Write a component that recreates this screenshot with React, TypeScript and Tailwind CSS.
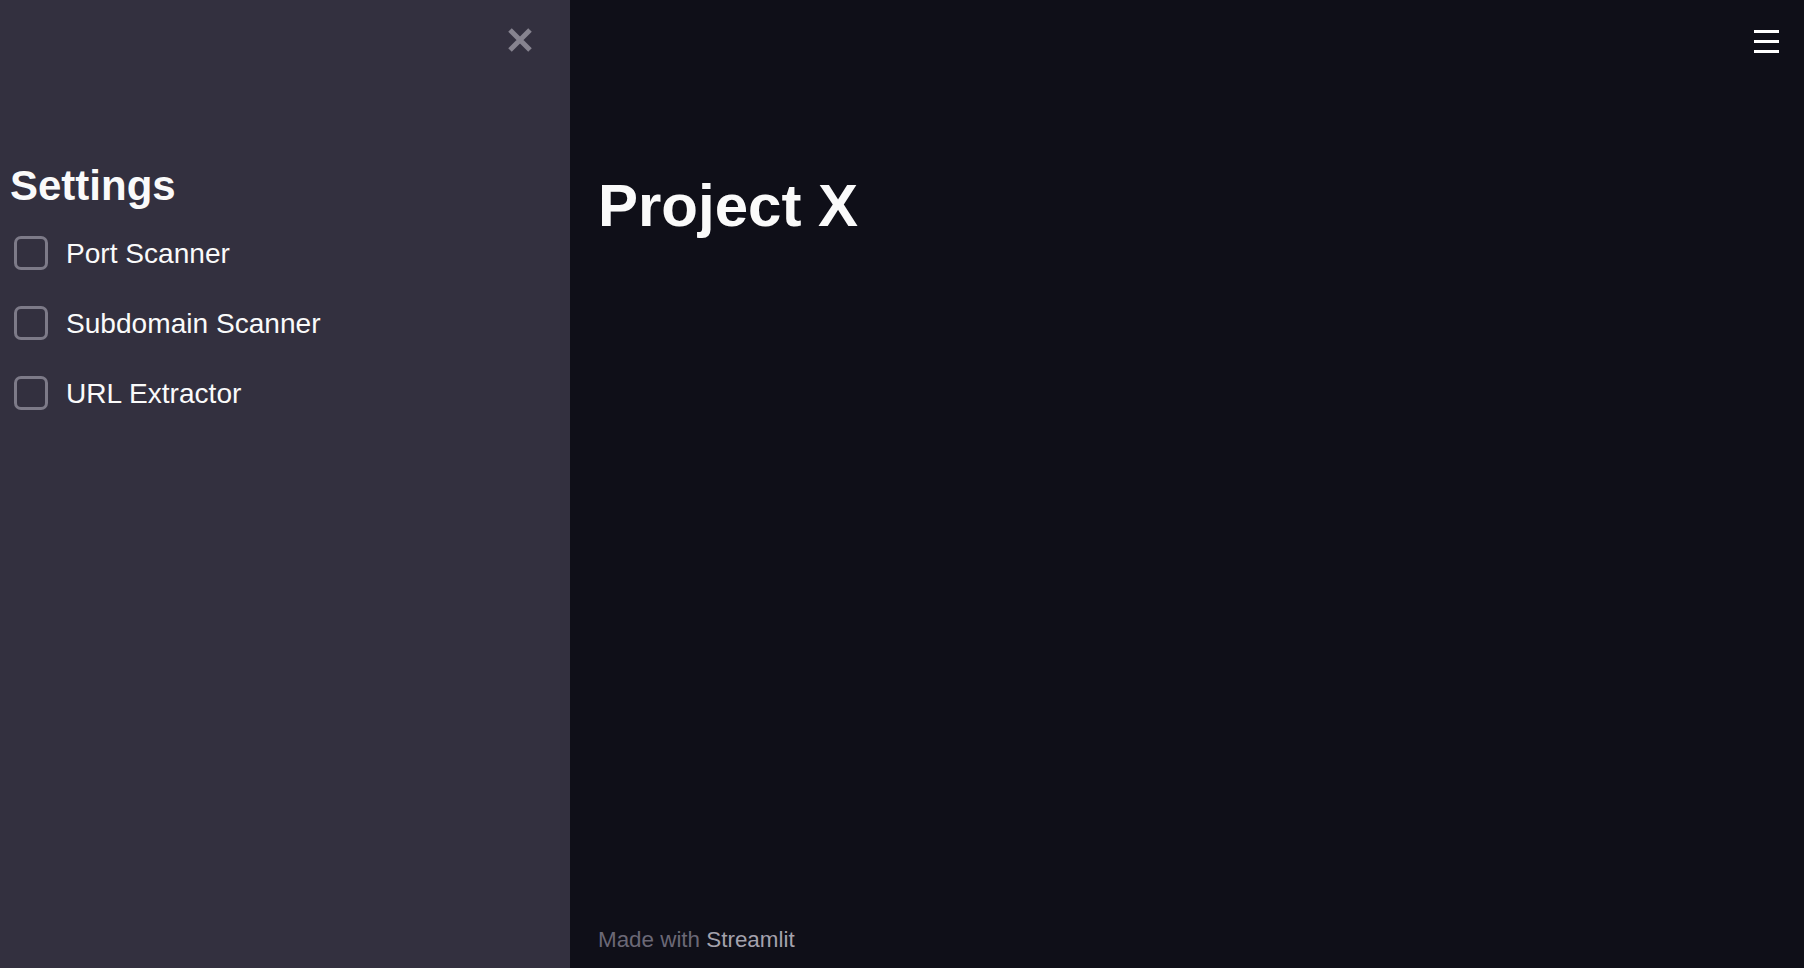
import { useState } from "react";

const TOOLS = ["Port Scanner", "Subdomain Scanner", "URL Extractor"];

export default function App() {
    const [checked, setChecked] = useState<Record<string, boolean>>({});

    return (
        <div className="flex h-screen w-full overflow-hidden font-['Liberation_Sans',Arial,sans-serif]">
            {/* Sidebar */}
            <aside className="flex w-[570px] shrink-0 flex-col bg-[#33303f]">
                <div className="flex h-[161px] items-start justify-end pr-[38px] pt-[28px]">
                    <button className="flex h-6 w-6 items-center justify-center">
                        <svg viewBox="0 0 24 24" className="h-6 w-6">
                            <path d="M2 2L22 22M22 2L2 22" stroke="#86838f" strokeWidth="5" strokeLinecap="butt" />
                        </svg>
                    </button>
                </div>
                <h2 className="pl-[10px] text-[42px] leading-[50px] font-bold text-[#fafafa]">Settings</h2>
                <div className="mt-[7px] flex flex-col">
                    {TOOLS.map((t) => (
                        <label key={t} className="flex h-[70px] cursor-pointer items-center gap-[18px] pl-[14px]">
                            <input
                                type="checkbox"
                                className="sr-only"
                                checked={!!checked[t]}
                                onChange={() => setChecked({ ...checked, [t]: !checked[t] })}
                            />
                            <span className="h-[34px] w-[34px] rounded-[7px] border-[3px] border-[#7d7a88]" />
                            <span className="pt-[2px] text-[28.1px] leading-none text-[#fafafa]">{t}</span>
                        </label>
                    ))}
                </div>
            </aside>

            {/* Main */}
            <main className="flex flex-1 flex-col bg-[#0f0f18] pl-[28px]">
                <div className="flex justify-end pr-[25px] pt-[30px]">
                    <div className="flex w-[25px] flex-col gap-[7px]">
                        <span className="h-[3px] bg-white" />
                        <span className="h-[3px] bg-white" />
                        <span className="h-[3px] bg-white" />
                    </div>
                </div>
                <h1 className="mt-[117px] text-[60px] leading-[72px] font-bold text-[#fafafa]">Project X</h1>
                <footer className="mt-auto pb-[15px] text-[22.4px] leading-[26px] text-[#6b6876]">
                    Made with <span className="text-[#a4a2ad]">Streamlit</span>
                </footer>
            </main>
        </div>
    );
}
